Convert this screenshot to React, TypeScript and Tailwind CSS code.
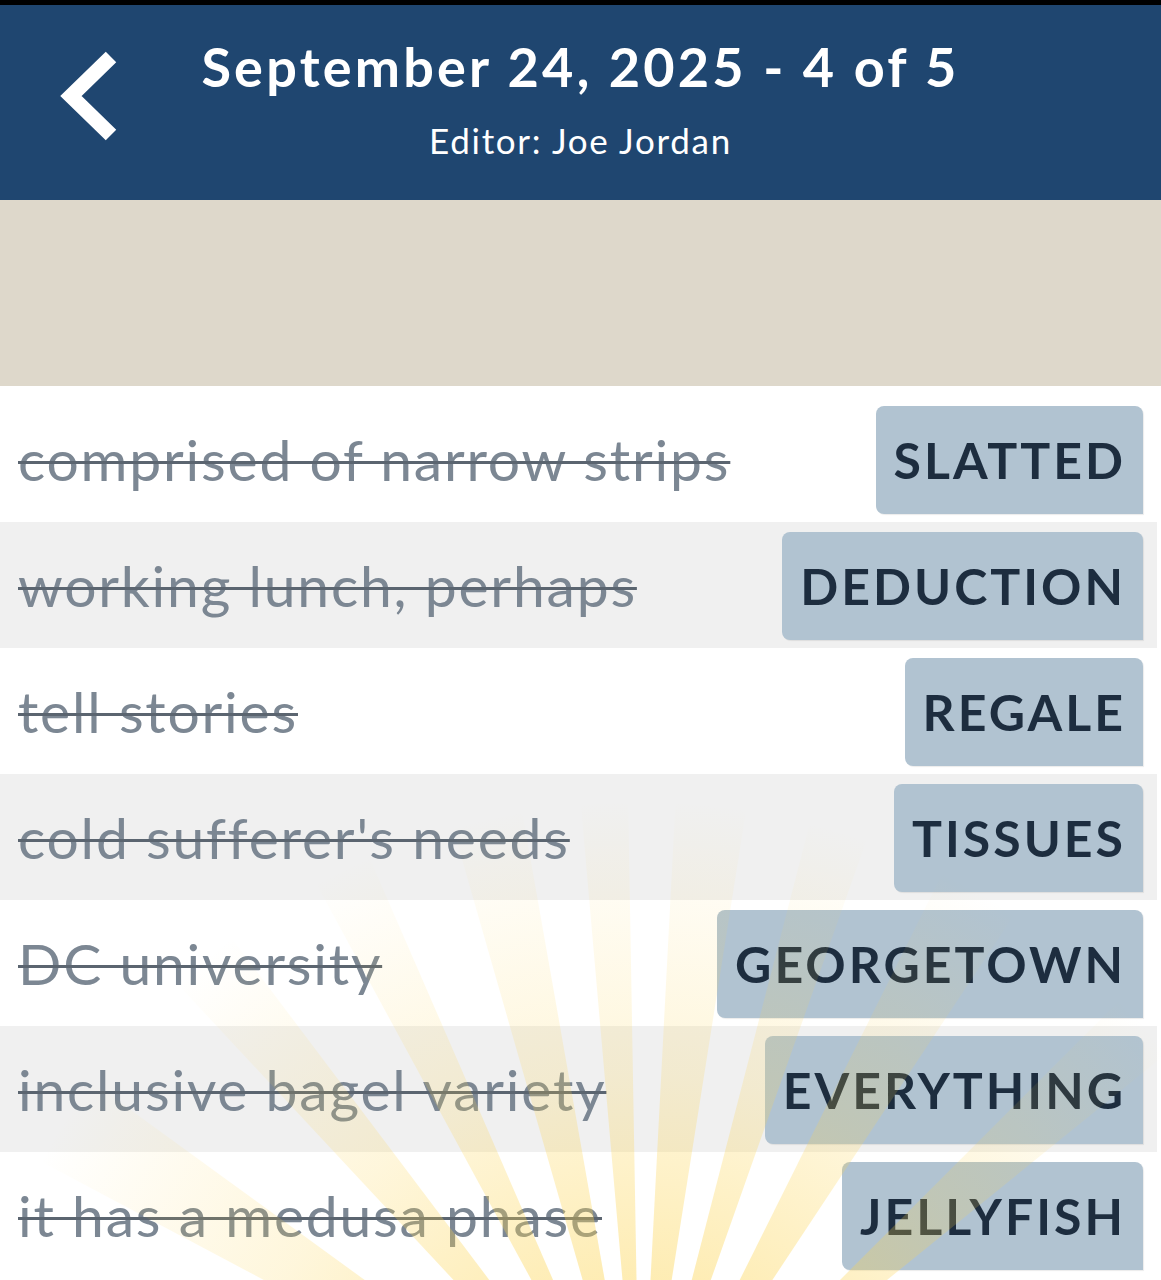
import React from "react";

const rows = [
  { clue: "comprised of narrow strips", answer: "SLATTED" },
  { clue: "working lunch, perhaps", answer: "DEDUCTION" },
  { clue: "tell stories", answer: "REGALE" },
  { clue: "cold sufferer's needs", answer: "TISSUES" },
  { clue: "DC university", answer: "GEORGETOWN" },
  { clue: "inclusive bagel variety", answer: "EVERYTHING" },
  { clue: "it has a medusa phase", answer: "JELLYFISH" },
];

function Rays() {
  const cx = 640;
  const cy = 1480;
  const R = 900;
  const rays: [number, number][] = [
    [-58, 4],
    [-40, 3],
    [-26, 2.5],
    [-13, 3],
    [-3, 2],
    [6, 3],
    [17, 2.5],
    [30, 3.5],
    [48, 3],
  ];
  return (
    <svg
      className="pointer-events-none absolute inset-0"
      width="1161"
      height="1280"
      viewBox="0 0 1161 1280"
    >
      <defs>
        <radialGradient id="rg" cx={cx} cy={cy} r={680} gradientUnits="userSpaceOnUse">
          <stop offset="0.3" stopColor="#fcd34d" stopOpacity="0.42" />
          <stop offset="0.6" stopColor="#fcd34d" stopOpacity="0.2" />
          <stop offset="1" stopColor="#fcd34d" stopOpacity="0" />
        </radialGradient>
      </defs>
      {rays.map(([a, w], i) => {
        const a1 = ((a - w - 90) * Math.PI) / 180;
        const a2 = ((a + w - 90) * Math.PI) / 180;
        const p1 = `${cx + R * Math.cos(a1)},${cy + R * Math.sin(a1)}`;
        const p2 = `${cx + R * Math.cos(a2)},${cy + R * Math.sin(a2)}`;
        return <polygon key={i} points={`${cx},${cy} ${p1} ${p2}`} fill="url(#rg)" />;
      })}
    </svg>
  );
}

export default function App() {
  return (
    <div
      className="relative h-[1280px] w-[1161px] overflow-hidden bg-white"
      style={{ fontFamily: "Lato, 'Open Sans', sans-serif" }}
    >
      <div className="h-[5px] bg-black" />
      <header className="relative flex h-[195px] flex-col items-center bg-[#1f4670] text-white">
        <svg
          className="absolute left-[55px] top-[44px]"
          width="64"
          height="94"
          viewBox="0 0 64 94"
        >
          <polyline
            points="56,8 16,47 56,86"
            fill="none"
            stroke="white"
            strokeWidth="15"
            strokeLinecap="butt"
            strokeLinejoin="miter"
          />
        </svg>
        <h1 className="mt-[27px] text-[54px] font-bold leading-[70px] tracking-[3.2px]">
          September 24, 2025 - 4 of 5
        </h1>
        <div className="mt-[16px] text-[35px] leading-[44px] tracking-[1.7px]">
          Editor: Joe Jordan
        </div>
      </header>
      <div className="h-[186px] bg-[#ded8cb]" />
      <div className="flex flex-col pt-[10px] pr-[4px]">
        {rows.map((r, i) => (
          <div
            key={r.answer}
            className={`flex h-[126px] items-start justify-between pl-[18px] pr-[14px] pt-[10px] ${
              i % 2 === 1 ? "bg-[#f0f0f0]" : "bg-white"
            }`}
          >
            <div className="flex h-[108px] items-center text-[57px] tracking-[1.8px] text-[#7c8793] line-through decoration-[#5b6570] decoration-[2.5px]">
              {r.clue}
            </div>
            <div className="flex h-[108px] items-center rounded-[8px] rounded-br-none bg-[#b1c3d1] pl-[18px] pr-[17px] text-[50px] font-bold tracking-[3px] text-[#1d2d3f] shadow-[1px_1px_1px_rgba(0,0,0,0.08)]">
              {r.answer}
            </div>
          </div>
        ))}
      </div>
      <Rays />
    </div>
  );
}
